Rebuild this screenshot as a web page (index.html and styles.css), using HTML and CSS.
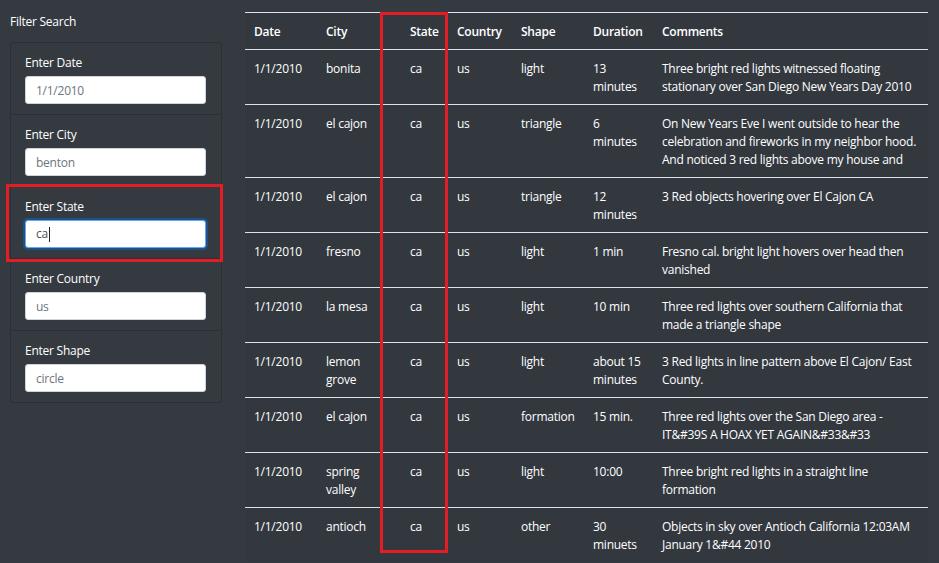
FILE: index.html
```html
<!DOCTYPE html>
<html>
<head>
<meta charset="utf-8">
<link rel="stylesheet" href="styles.css">
</head>
<body>
<div class="page">
  <aside class="sidebar">
    <div class="sidebar-title">Filter Search</div>
    <ul class="filters">
      <li class="filter"><label>Enter Date</label><input class="field" placeholder="1/1/2010"></li>
      <li class="filter"><label>Enter City</label><input class="field" placeholder="benton"></li>
      <li class="filter"><label>Enter State</label><div class="field focused">ca<span class="caret"></span></div></li>
      <li class="filter"><label>Enter Country</label><input class="field" placeholder="us"></li>
      <li class="filter"><label>Enter Shape</label><input class="field" placeholder="circle"></li>
    </ul>
    <div class="mark mark-filter"></div>
  </aside>
  <main class="main">
    <table class="ufo">
      <colgroup>
        <col class="c-date"><col class="c-city"><col class="c-state"><col class="c-country"><col class="c-shape"><col class="c-dur"><col class="c-com">
      </colgroup>
      <thead>
        <tr><th>Date</th><th>City</th><th class="st">State</th><th>Country</th><th>Shape</th><th>Duration</th><th>Comments</th></tr>
      </thead>
      <tbody>
        <tr><td>1/1/2010</td><td>bonita</td><td class="st">ca</td><td>us</td><td>light</td><td>13 minutes</td><td>Three bright red lights witnessed floating stationary over San Diego New Years Day 2010</td></tr>
        <tr><td>1/1/2010</td><td>el cajon</td><td class="st">ca</td><td>us</td><td>triangle</td><td>6 minutes</td><td>On New Years Eve I went outside to hear the celebration and fireworks in my neighbor hood. And noticed 3 red lights above my house and</td></tr>
        <tr><td>1/1/2010</td><td>el cajon</td><td class="st">ca</td><td>us</td><td>triangle</td><td>12 minutes</td><td>3 Red objects hovering over El Cajon CA</td></tr>
        <tr><td>1/1/2010</td><td>fresno</td><td class="st">ca</td><td>us</td><td>light</td><td>1 min</td><td>Fresno cal. bright light hovers over head then vanished</td></tr>
        <tr><td>1/1/2010</td><td>la mesa</td><td class="st">ca</td><td>us</td><td>light</td><td>10 min</td><td>Three red lights over southern California that made a triangle shape</td></tr>
        <tr><td>1/1/2010</td><td>lemon grove</td><td class="st">ca</td><td>us</td><td>light</td><td>about 15 minutes</td><td>3 Red lights in line pattern above El Cajon/ East County.</td></tr>
        <tr><td>1/1/2010</td><td>el cajon</td><td class="st">ca</td><td>us</td><td>formation</td><td>15 min.</td><td>Three red lights over the San Diego area - IT&amp;#39S A HOAX YET AGAIN&amp;#33&amp;#33</td></tr>
        <tr><td>1/1/2010</td><td>spring valley</td><td class="st">ca</td><td>us</td><td>light</td><td>10:00</td><td>Three bright red lights in a straight line formation</td></tr>
        <tr><td>1/1/2010</td><td>antioch</td><td class="st">ca</td><td>us</td><td>other</td><td>30 minuets</td><td>Objects in sky over Antioch California 12:03AM January 1&amp;#44 2010</td></tr>
      </tbody>
    </table>
    <div class="mark mark-col"></div>
  </main>
</div>
</body>
</html>
```
FILE: styles.css
```css
* { box-sizing: border-box; }
html, body { margin: 0; padding: 0; }
body {
  background: #353a41;
  color: #fff;
  font-family: "Open Sans", "Segoe UI", sans-serif;
  font-size: 12px;
  line-height: 18px;
  letter-spacing: -0.25px;
  height: 563px;
  overflow: hidden;
}
.page {
  display: flex;
  align-items: flex-start;
}
.sidebar {
  position: relative;
  width: 245px;
  padding: 13px 0 0 10px;
  flex: none;
}
.sidebar-title {
  margin-bottom: 11px;
}
.filters {
  list-style: none;
  margin: 0;
  padding: 0;
  width: 212px;
  border: 1px solid #2b3035;
  border-radius: 3px;
}
.filter {
  display: flex;
  flex-direction: column;
  padding: 11px 15px 10px 14px;
  border-top: 1px solid #2b3035;
}
.filter:first-child { border-top: none; }
.filter label {
  margin-bottom: 4px;
}
.field {
  width: 181px;
  height: 28px;
  border: 1px solid #ced4da;
  border-radius: 3px;
  background: #fff;
  padding: 0 10px;
  font-family: inherit;
  font-size: 12px;
  letter-spacing: -0.25px;
  color: #495057;
  outline: none;
  display: flex;
  align-items: center;
}
.field::placeholder { color: #6c757d; opacity: 1; }
.field.focused {
  border-color: #6aa6e8;
  box-shadow: 0 0 0 2px rgba(0, 110, 230, 0.45);
}
.caret {
  display: inline-block;
  width: 1px;
  height: 15px;
  background: #222;
  margin-left: 1px;
}
.main {
  position: relative;
  padding-top: 12px;
}
.ufo {
  width: 683px;
  table-layout: fixed;
  border-collapse: collapse;
  background: #33383f;
}
.c-date { width: 72px; }
.c-city { width: 63px; }
.c-state { width: 68px; }
.c-country { width: 64px; }
.c-shape { width: 72px; }
.c-dur { width: 69px; }
.c-com { width: 275px; }
.ufo th, .ufo td {
  text-align: left;
  vertical-align: top;
  padding: 10px 9px 8px;
  border-top: 1px solid #dee2e6;
}
.ufo th {
  font-weight: 600;
}
.ufo thead tr { border-bottom: 1px solid #dee2e6; }
.ufo th.st, .ufo td.st { padding-left: 30px; }
.mark {
  position: absolute;
  border: 3px solid #e41d24;
  pointer-events: none;
}
.mark-filter {
  left: 6px;
  top: 184px;
  width: 217px;
  height: 78px;
}
.mark-col {
  left: 135px;
  top: 12px;
  width: 68px;
  height: 541px;
}
```
